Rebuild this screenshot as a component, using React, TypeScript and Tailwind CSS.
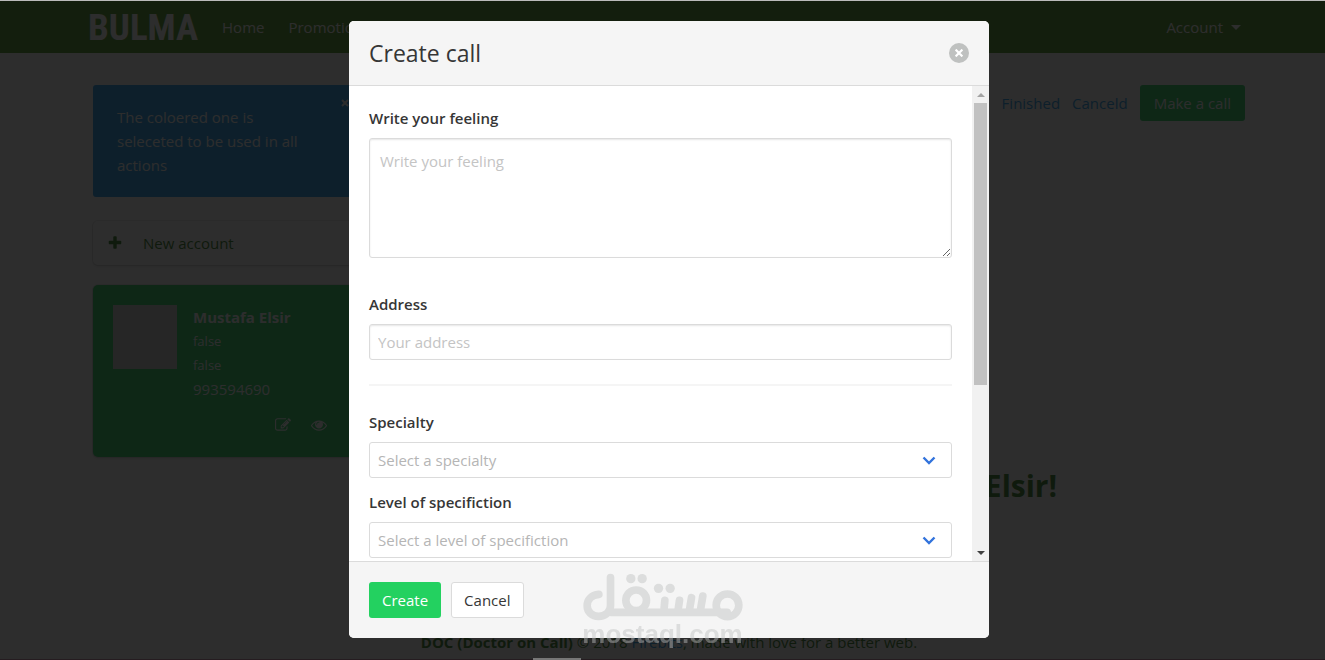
import React from "react";

type IconProps = { path: string; className?: string };

const PENCIL_SQUARE =
  "M888 1184l116-116-152-152-116 116v56h96v96h56zm440-720q-16-16-33 1l-350 350q-17 17-1 33t33-1l350-350q17-17 1-33zm80 594v190q0 119-84.5 203.5t-203.5 84.5h-832q-119 0-203.5-84.5t-84.5-203.5v-832q0-119 84.5-203.5t203.5-84.5h832q63 0 117 25 15 7 18 23 3 17-9 29l-49 49q-14 14-32 8-23-6-45-6h-832q-66 0-113 47t-47 113v832q0 66 47 113t113 47h832q66 0 113-47t47-113v-126q0-13 9-22l64-64q15-15 35-7t20 29zm-96-738l288 288-672 672h-288v-288zm444 132l-92 92-288-288 92-92q28-28 68-28t68 28l152 152q28 28 28 68t-28 68z";
const EYE =
  "M1664 960q-152-236-381-353 61 104 61 225 0 185-131.5 316.5t-316.5 131.5-316.5-131.5-131.5-316.5q0-121 61-225-229 117-381 353 133 205 333.5 326.5t434.5 121.5 434.5-121.5 333.5-326.5zm-720-384q0-20-14-34t-34-14q-125 0-214.5 89.5t-89.5 214.5q0 20 14 34t34 14 34-14 14-34q0-86 61-147t147-61q20 0 34-14t14-34zm848 384q0 34-20 69-140 230-376.5 368.5t-499.5 138.5-499.5-139-376.5-368q-20-35-20-69t20-69q140-229 376.5-368t499.5-139 499.5 139 376.5 368q20 35 20 69z";
const PLUS =
  "M1600 736v192q0 40-28 68t-68 28h-416v416q0 40-28 68t-68 28h-192q-40 0-68-28t-28-68v-416h-416q-40 0-68-28t-28-68v-192q0-40 28-68t68-28h416v-416q0-40 28-68t68-28h192q40 0 68 28t28 68v416h416q40 0 68 28t28 68z";

function Icon({ path, className }: IconProps) {
  return (
    <svg viewBox="0 0 1792 1792" fill="currentColor" aria-hidden="true" className={className}>
      <path d={path} />
    </svg>
  );
}

function Navbar() {
  return (
    <nav className="flex justify-center bg-[#4a9420] pl-[13px] text-white">
      <div className="flex h-[52px] w-full max-w-[1162px] items-center justify-between">
        <div className="flex items-center gap-6">
          <a href="#" className="font-['Roboto_Condensed','Roboto',sans-serif] text-[37px] leading-none font-bold">
            BULMA
          </a>
          <a href="#home">Home</a>
          <a href="#promotions">Promotions</a>
        </div>
        <button type="button" className="flex items-center gap-2 pr-[9px]">
          Account
          <svg viewBox="0 0 10 5" fill="currentColor" aria-hidden="true" className="h-[5px] w-[10px]">
            <path d="M0 0h10L5 5z" />
          </svg>
        </button>
      </div>
    </nav>
  );
}

function Sidebar() {
  return (
    <aside className="w-[270px] shrink-0">
      <div className="relative mb-6 rounded-[3px] bg-[#209cee] px-6 py-5 leading-6 text-white">
        <p className="pr-4">The coloered one is seleceted to be used in all actions</p>
        <button type="button" aria-label="Dismiss" className="absolute top-2 right-2 flex size-5 items-center justify-center">
          <svg viewBox="0 0 8 8" stroke="currentColor" strokeWidth="2" aria-hidden="true" className="size-2">
            <path d="M1 1l6 6M7 1l-6 6" />
          </svg>
        </button>
      </div>
      <a
        href="#new-account"
        className="mb-5 flex h-11 items-center gap-5 rounded-[5px] bg-white px-[14px] text-[#2f7a20] shadow-[0_2px_3px_rgba(10,10,10,0.1),0_0_0_1px_rgba(10,10,10,0.1)]"
      >
        <Icon path={PLUS} className="size-4" />
        New account
      </a>
      <article className="rounded-[5px] bg-[#23d160] p-5 text-white shadow-[0_2px_3px_rgba(10,10,10,0.1),0_0_0_1px_rgba(10,10,10,0.1)]">
        <div className="flex gap-4">
          <div className="size-16 shrink-0 bg-[#cccccc]" />
          <div className="leading-6">
            <p className="font-bold">Mustafa Elsir</p>
            <p className="text-[13px] leading-6">false</p>
            <p className="text-[13px] leading-6">false</p>
            <p>993594690</p>
          </div>
        </div>
        <div className="mt-3 flex h-6 items-center justify-end gap-5 pr-4">
          <button type="button" aria-label="Edit account">
            <Icon path={PENCIL_SQUARE} className="size-4" />
          </button>
          <button type="button" aria-label="View account">
            <Icon path={EYE} className="size-4" />
          </button>
        </div>
      </article>
    </aside>
  );
}

function SelectField({ id, label, placeholder }: { id: string; label: string; placeholder: string }) {
  return (
    <div>
      <label htmlFor={id} className="mb-2 block leading-6 font-semibold text-[#363636]">
        {label}
      </label>
      <div className="relative">
        <select
          id={id}
          defaultValue=""
          className="h-9 w-full appearance-none rounded-[3px] border border-[#dbdbdb] bg-white px-2 text-[#b5b5b5]"
        >
          <option value="">{placeholder}</option>
        </select>
        <svg
          viewBox="0 0 14 10"
          fill="none"
          stroke="#3273dc"
          strokeWidth="2.4"
          aria-hidden="true"
          className="pointer-events-none absolute top-[14px] right-4 h-[10px] w-[14px]"
        >
          <path d="M1.5 1.5L7 7l5.5-5.5" />
        </svg>
      </div>
    </div>
  );
}

function Scrollbar() {
  return (
    <div aria-hidden="true" className="flex w-[17px] shrink-0 flex-col bg-[#f1f1f1]">
      <div className="flex h-[17px] items-center justify-center">
        <svg viewBox="0 0 8 4" fill="#a3a3a3" className="h-1 w-2">
          <path d="M0 4h8L4 0z" />
        </svg>
      </div>
      <div className="min-h-0 flex-1 px-[2px]">
        <div className="h-[64%] bg-[#c1c1c1]" />
      </div>
      <div className="flex h-[17px] items-center justify-center">
        <svg viewBox="0 0 8 4" fill="#404040" className="h-1 w-2">
          <path d="M0 0h8L4 4z" />
        </svg>
      </div>
    </div>
  );
}

function CreateCallModal() {
  return (
    <div className="fixed inset-x-0 top-px bottom-px flex justify-center bg-[rgba(10,10,10,0.86)] pt-5 pb-[21px] pl-[13px]">
      <form
        role="dialog"
        aria-labelledby="modal-title"
        className="flex w-full max-w-[640px] flex-col overflow-hidden rounded-[5px] bg-white"
      >
        <header className="flex items-center justify-between border-b border-[#dbdbdb] bg-[#f5f5f5] p-5">
          <h2 id="modal-title" className="text-[23px] leading-6 text-[#363636]">
            Create call
          </h2>
          <button type="button" aria-label="Close" className="flex size-5 items-center justify-center rounded-full bg-[#bfc1c0]">
            <svg viewBox="0 0 8 8" stroke="white" strokeWidth="2.2" aria-hidden="true" className="size-2">
              <path d="M0.6 0.6l6.8 6.8M7.4 0.6l-6.8 6.8" />
            </svg>
          </button>
        </header>
        <div className="flex min-h-0 flex-1">
          <div className="flex-1 overflow-y-auto p-5 [scrollbar-width:none]">
            <label htmlFor="feeling" className="mb-2 block leading-6 font-semibold text-[#363636]">
              Write your feeling
            </label>
            <textarea
              id="feeling"
              placeholder="Write your feeling"
              className="block h-[120px] w-full resize-y rounded-[3px] border border-[#dbdbdb] p-[10px] leading-6 shadow-[inset_0_1px_2px_rgba(10,10,10,0.1)] placeholder:text-[#c4c4c4]"
            />
            <label htmlFor="address" className="mt-[34px] mb-2 block leading-6 font-semibold text-[#363636]">
              Address
            </label>
            <input
              id="address"
              type="text"
              placeholder="Your address"
              className="block h-9 w-full rounded-[3px] border border-[#dbdbdb] px-2 shadow-[inset_0_1px_2px_rgba(10,10,10,0.1)] placeholder:text-[#c4c4c4]"
            />
            <hr className="my-6 h-[2px] border-0 bg-[#f5f5f5]" />
            <div className="flex flex-col gap-3">
              <SelectField id="specialty" label="Specialty" placeholder="Select a specialty" />
              <SelectField id="level" label="Level of specifiction" placeholder="Select a level of specifiction" />
            </div>
          </div>
          <Scrollbar />
        </div>
        <footer className="flex gap-[10px] border-t border-[#dbdbdb] bg-[#f5f5f5] p-5">
          <button type="submit" className="h-9 rounded-[3px] bg-[#23d160] px-[13px] text-white">
            Create
          </button>
          <button type="button" className="h-9 rounded-[3px] border border-[#dbdbdb] bg-white px-3 text-[#363636]">
            Cancel
          </button>
        </footer>
      </form>
    </div>
  );
}

function Watermark() {
  return (
    <div className="pointer-events-none fixed bottom-[13px] left-1/2 flex -translate-x-1/2 flex-col items-center text-[#bfc1c0] opacity-45">
      <svg
        viewBox="36 24 483 144"
        fill="none"
        stroke="currentColor"
        strokeWidth="23"
        strokeLinecap="round"
        strokeLinejoin="round"
        role="img"
        aria-label="مستقل"
        className="h-12 w-[161px]"
      >
        <path d="M85 88C62 90 50 105 50 122C50 141 65 154 84 154C104 154 120 141 120 122V38" />
        <path d="M120 142H470" />
        <circle cx="197" cy="106" r="31" />
        <circle cx="471" cy="121" r="34" />
        <path d="M283 106L280 140M327 106L322 140M363 98L356 140M397 93L389 140" />
        <g fill="currentColor" stroke="none">
          <circle cx="181" cy="41" r="14" />
          <circle cx="215" cy="41" r="14" />
          <circle cx="264" cy="70" r="14" />
          <circle cx="299" cy="70" r="14" />
        </g>
      </svg>
      <p className="font-['Liberation_Sans',sans-serif] text-[26px] leading-[26px] font-bold">mostaql.com</p>
    </div>
  );
}

export default function App() {
  return (
    <div className="flex min-h-screen flex-col overflow-hidden border-t border-[#bbbbbb] bg-white font-['Open_Sans','Noto_Sans',sans-serif] text-[15px] text-[#4a4a4a]">
      <Navbar />
      <div className="flex flex-1 justify-center pt-8 pl-[13px]">
        <div className="flex w-full max-w-[1152px] gap-6">
          <Sidebar />
          <main className="flex flex-1 flex-col">
            <div className="flex items-center justify-end gap-3 text-[#209cee]">
              <a href="#finished">Finished</a>
              <a href="#canceled">Canceld</a>
              <button type="button" className="h-9 rounded-[3px] bg-[#23d160] px-[14px] text-white">
                Make a call
              </button>
            </div>
            <h1 className="mt-[345px] pl-[46px] text-center text-[30px] leading-10 font-bold text-[#2f7a20]">
              Welcome back, Mustafa Elsir!
            </h1>
          </main>
        </div>
      </div>
      <footer className="pb-[6px] pl-[13px] text-center leading-6 text-[#2f7a20]">
        <strong className="font-bold">DOC (Doctor on Call)</strong> © 2018 <a href="#firebits" className="text-[#209cee]">Firebits</a>, made with love for a better web.
      </footer>
      <CreateCallModal />
      <Watermark />
      <div className="fixed inset-x-0 bottom-0 h-px bg-[#251c20]" />
      <div className="fixed bottom-0 left-[533px] h-[2px] w-12 bg-[#777777]" />
    </div>
  );
}
